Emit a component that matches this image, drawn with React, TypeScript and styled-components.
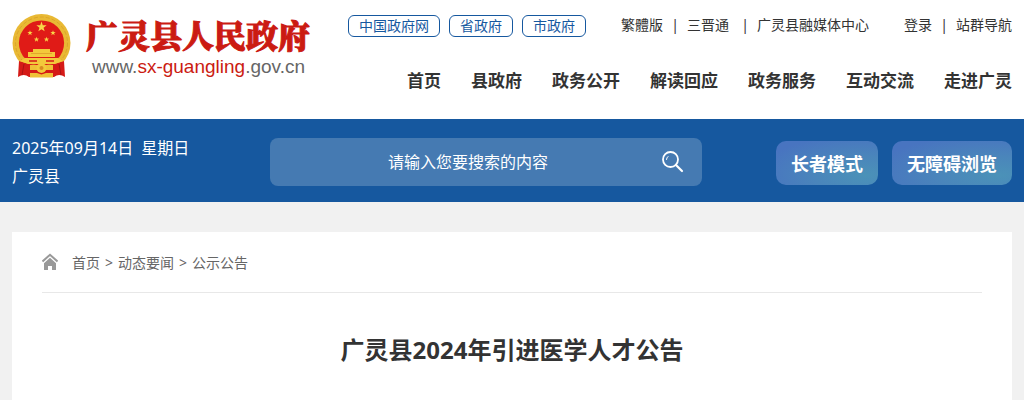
import React from "react";
import styled, { createGlobalStyle } from "styled-components";

const GlobalStyle = createGlobalStyle`
  * { box-sizing: border-box; }
  body {
    margin: 0;
    background: #f1f1f1;
    color: #333;
    font-family: "Noto Sans", "Noto Sans CJK SC", sans-serif;
    font-size: 14px;
  }
  a { color: inherit; text-decoration: none; }
  button, input { font: inherit; }
`;

const Container = styled.div`
  max-width: 1200px;
  margin: 0 auto;
  padding: 0 12px;
`;

const Header = styled.header`
  background: #fff;
`;

const HeaderRow = styled(Container)`
  display: flex;
  justify-content: space-between;
  padding-bottom: 26px;
`;

const Brand = styled.a`
  display: flex;
  gap: 14px;
  padding-top: 13px;
`;

const Emblem = styled.svg`
  width: 60px;
  height: 66px;
`;

const BrandText = styled.div`
  display: flex;
  flex-direction: column;
  white-space: nowrap;
`;

const BrandName = styled.span`
  color: #cb1b12;
  font-family: "Noto Serif CJK SC", "Noto Sans CJK SC", serif;
  font-size: 32px;
  font-weight: 900;
  line-height: 42px;
  -webkit-text-stroke: 1px currentColor;
`;

const BrandUrl = styled.span`
  padding-left: 6px;
  color: #666;
  font-family: "Liberation Sans", sans-serif;
  font-size: 19px;
  line-height: 24px;
`;

const BrandHost = styled.span`
  color: #cb1b12;
`;

const HeaderSide = styled.div`
  display: flex;
  flex-direction: column;
  align-items: flex-end;
  padding-top: 15px;
  white-space: nowrap;
`;

const TopLine = styled.div`
  display: flex;
  align-items: flex-start;
  gap: 35px;
`;

const Pills = styled.div`
  display: flex;
  gap: 9px;
`;

const Pill = styled.a`
  padding: 0 10px;
  border: 1px solid #16589f;
  border-radius: 6px;
  color: #16589f;
  line-height: 20px;
`;

const LinkGroup = styled.div`
  display: flex;
  line-height: 20px;
`;

const Divider = styled.span<{ $wide?: boolean }>`
  width: ${(p) => (p.$wide ? 28 : 24)}px;
  padding-left: ${(p) => (p.$wide ? 4 : 0)}px;
  text-align: center;
`;

const MainNav = styled.nav`
  display: flex;
  gap: 30px;
  margin-top: 32px;
  font-size: 17px;
  font-weight: 700;
  line-height: 24px;
`;

const Banner = styled.div`
  background: #16589f;
`;

const BannerRow = styled(Container)`
  display: flex;
  align-items: flex-start;
  justify-content: space-between;
  padding-top: 15px;
  padding-bottom: 12px;
  color: #fff;
`;

const DateBlock = styled.div`
  width: 184px;
  font-size: 16px;
  line-height: 28px;
  white-space: nowrap;
`;

const DateLine = styled.div`
  display: flex;
  gap: 8px;
`;

const SearchForm = styled.form`
  display: flex;
  width: 432px;
  height: 48px;
  margin-top: 4px;
  border-radius: 8px;
  background: #457ab2;
`;

const SearchInput = styled.input`
  flex: 1;
  min-width: 0;
  padding: 0 0 0 4px;
  border: 0;
  outline: 0;
  background: transparent;
  color: #fff;
  font-size: 16px;
  text-align: center;
  &::placeholder { color: #fff; opacity: 1; }
`;

const SearchButton = styled.button`
  display: flex;
  align-items: center;
  width: 40px;
  padding: 0;
  border: 0;
  background: transparent;
  color: #fff;
  cursor: pointer;
`;

const ModeButtons = styled.div`
  display: flex;
  gap: 14px;
  padding-top: 7px;
`;

const ModeButton = styled.button`
  height: 44px;
  padding: 0 15px;
  border: 0;
  border-radius: 10px;
  background: radial-gradient(ellipse at 88% 78%, #4b92b8 0%, #4a85bb 40%, #4874c0 85%);
  color: #fff;
  font-size: 18px;
  font-weight: 700;
  white-space: nowrap;
  cursor: pointer;
`;

const Main = styled(Container).attrs({ as: "main" })`
  padding-top: 30px;
`;

const Article = styled.article`
  padding: 0 30px;
  background: #fff;
`;

const Crumbs = styled.nav`
  display: flex;
  align-items: center;
  height: 61px;
  border-bottom: 1px solid #e8e8e8;
  color: #666;
`;

const HomeIcon = styled.svg`
  width: 16px;
  height: 18px;
  margin-right: 14px;
`;

const CrumbList = styled.div`
  display: flex;
  gap: 5px;
  padding-top: 2px;
  line-height: 20px;
`;

const Title = styled.h1`
  margin: 0;
  padding: 39px 0 32px;
  font-size: 24px;
  font-weight: 700;
  line-height: 36px;
  text-align: center;
`;

const star = (cx: number, cy: number, r: number) =>
  Array.from({ length: 10 }, (_, i) => {
    const a = (Math.PI / 5) * i - Math.PI / 2;
    const d = i % 2 ? r * 0.4 : r;
    return `${(cx + d * Math.cos(a)).toFixed(2)},${(cy + d * Math.sin(a)).toFixed(2)}`;
  }).join(" ");

const stars: [number, number, number][] = [
  [29.5, 14, 5.4],
  [18, 20, 2.8],
  [41, 20, 2.8],
  [24.5, 26.5, 2.8],
  [34.5, 26.5, 2.8],
];

const NationalEmblem = () => (
  <Emblem viewBox="0 0 60 66" aria-hidden="true">
    <circle cx="29.5" cy="30" r="29" fill="#e9b934" />
    <circle cx="29.5" cy="30" r="26" fill="none" stroke="#dca52b" strokeWidth="1" strokeDasharray="4 2" />
    <circle cx="29.5" cy="30" r="22.6" fill="#e01b17" />
    {stars.map(([x, y, r]) => (
      <polygon key={x} points={star(x, y, r)} fill="#f8d548" />
    ))}
    <path d="M21 36h17v3h5v5H16v-5h5z" fill="#f3c93b" />
    <path d="M19 40.500h21" stroke="#e3a52c" strokeWidth="1" />
    <path d="M7 48Q18 52 29.500 52T52 48L53 64Q47 60 42 64H17Q12 60 6 64Z" fill="#d51a17" />
    <path d="M13 45h33l5 3-8 3H16l-8-3z" fill="#f3c93b" />
    <path d="M17 48h8M34 48h8" stroke="#d51a17" strokeWidth="1.500" />
    <path d="M12 51l-2 11M47 51l2 11" stroke="#a91312" strokeWidth="1" />
    <path d="M18 52h23v5H18z" fill="#efc137" />
    <circle cx="29.500" cy="55" r="5" fill="#f3c93b" />
    <circle cx="29.500" cy="55" r="2" fill="#d98b21" />
    <path d="M18 60h7l4.500 1.500L34 60h7v4.500H18z" fill="#efc137" />
  </Emblem>
);

const navItems = ["首页", "县政府", "政务公开", "解读回应", "政务服务", "互动交流", "走进广灵"];

export default function App() {
  return (
    <>
      <GlobalStyle />
      <Header>
        <HeaderRow>
          <Brand href="#">
            <NationalEmblem />
            <BrandText>
              <BrandName>广灵县人民政府</BrandName>
              <BrandUrl>
                www.<BrandHost>sx-guangling</BrandHost>.gov.cn
              </BrandUrl>
            </BrandText>
          </Brand>
          <HeaderSide>
            <TopLine>
              <Pills>
                <Pill href="#">中国政府网</Pill>
                <Pill href="#">省政府</Pill>
                <Pill href="#">市政府</Pill>
              </Pills>
              <LinkGroup>
                <a href="#" lang="zh-Hant">繁體版</a>
                <Divider>|</Divider>
                <a href="#">三晋通</a>
                <Divider $wide>|</Divider>
                <a href="#">广灵县融媒体中心</a>
              </LinkGroup>
              <LinkGroup>
                <a href="#">登录</a>
                <Divider>|</Divider>
                <a href="#">站群导航</a>
              </LinkGroup>
            </TopLine>
            <MainNav>
              {navItems.map((item) => (
                <a key={item} href="#">{item}</a>
              ))}
            </MainNav>
          </HeaderSide>
        </HeaderRow>
      </Header>
      <Banner>
        <BannerRow>
          <DateBlock>
            <DateLine>
              <span>2025年09月14日</span>
              <span>星期日</span>
            </DateLine>
            <div>广灵县</div>
          </DateBlock>
          <SearchForm onSubmit={(e: React.FormEvent) => e.preventDefault()}>
            <SearchInput type="text" aria-label="搜索" placeholder="请输入您要搜索的内容" />
            <SearchButton type="submit" aria-label="搜索">
              <svg width="22" height="22" viewBox="0 0 22 22" fill="none" stroke="currentColor" strokeLinecap="round">
                <circle cx="8.500" cy="8.500" r="7.500" strokeWidth="1.800" />
                <path d="M14 14l6 6" strokeWidth="2.200" />
                <path d="M4.500 8.500a4 4 0 0 1 1.500-3" strokeWidth="1" />
              </svg>
            </SearchButton>
          </SearchForm>
          <ModeButtons>
            <ModeButton type="button">长者模式</ModeButton>
            <ModeButton type="button">无障碍浏览</ModeButton>
          </ModeButtons>
        </BannerRow>
      </Banner>
      <Main>
        <Article>
          <Crumbs aria-label="breadcrumb">
            <HomeIcon viewBox="0 0 16 18" aria-hidden="true">
              <path d="M.5 8.500L8 1.800l7.500 6.700" fill="none" stroke="#999" strokeWidth="2" />
              <path d="M8 4.800l6 5.400v6.300q0 .5-.5.500H10v-4H6v4H2.500q-.5 0-.5-.5v-6.300z" fill="#999" />
            </HomeIcon>
            <CrumbList>
              <a href="#">首页</a>
              <span>&gt;</span>
              <a href="#">动态要闻</a>
              <span>&gt;</span>
              <a href="#">公示公告</a>
            </CrumbList>
          </Crumbs>
          <Title>广灵县2024年引进医学人才公告</Title>
        </Article>
      </Main>
    </>
  );
}
